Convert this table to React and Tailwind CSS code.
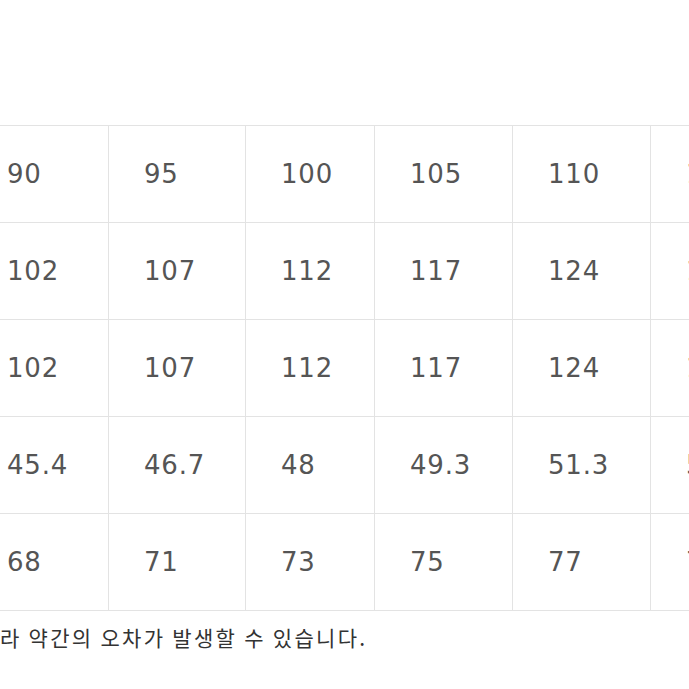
const rows = [
  ["90", "95", "100", "105", "110", "115"],
  ["102", "107", "112", "117", "124", "129"],
  ["102", "107", "112", "117", "124", "129"],
  ["45.4", "46.7", "48", "49.3", "51.3", "53.3"],
  ["68", "71", "73", "75", "77", "79"],
];

const widths = ["w-[137px]", "w-[137px]", "w-[129px]", "w-[138px]", "w-[138px]", "w-[138px]"];

export default function App() {
  return (
    <div className="w-[689px] h-[689px] overflow-hidden bg-white">
      <div className="pt-[125px] ml-[-29px]">
        <table className="border-collapse table-fixed w-[817px]">
          <tbody>
            {rows.map((row, i) => (
              <tr key={i} className="h-[97px]">
                {row.map((v, j) => (
                  <td
                    key={j}
                    className={`${widths[j]} border border-[#e3e3e3] pl-[35px] align-middle text-[26px] tracking-[0.8px] text-[#555] font-['DejaVu_Sans',sans-serif] whitespace-nowrap`}
                  >
                    {v}
                  </td>
                ))}
              </tr>
            ))}
          </tbody>
        </table>
      </div>
      <p className="mt-[12px] text-[21px] leading-[28px] tracking-[2.3px] text-[#333] font-['Noto_Sans_CJK_KR',sans-serif] whitespace-nowrap">
        라 약간의 오차가 발생할 수 있습니다.
      </p>
    </div>
  );
}
